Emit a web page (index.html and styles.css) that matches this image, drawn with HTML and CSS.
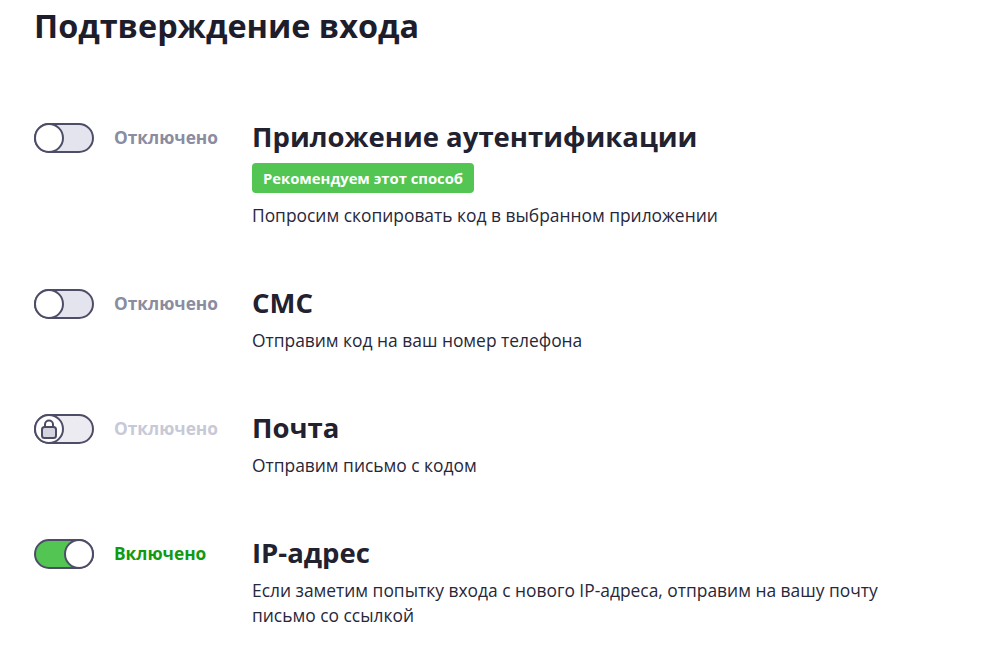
FILE: index.html
```html
<!DOCTYPE html>
<html lang="ru">
<head>
<meta charset="utf-8">
<title>Подтверждение входа</title>
<link rel="stylesheet" href="styles.css">
</head>
<body>
<main class="page">
  <h1 class="title">Подтверждение входа</h1>
  <ul class="methods">
    <li class="method">
      <div class="switch-col">
        <span class="toggle"><span class="knob"></span></span>
        <span class="state">Отключено</span>
      </div>
      <div class="info">
        <h2 class="name">Приложение аутентификации</h2>
        <span class="badge">Рекомендуем этот способ</span>
        <p class="desc">Попросим скопировать код в выбранном приложении</p>
      </div>
    </li>
    <li class="method">
      <div class="switch-col">
        <span class="toggle"><span class="knob"></span></span>
        <span class="state">Отключено</span>
      </div>
      <div class="info">
        <h2 class="name">СМС</h2>
        <p class="desc">Отправим код на ваш номер телефона</p>
      </div>
    </li>
    <li class="method">
      <div class="switch-col">
        <span class="toggle toggle-locked"><span class="knob">
          <svg class="lock" viewBox="0 0 24 24" width="24" height="24" aria-hidden="true">
            <path d="M8 10.5V7.5a4 4 0 0 1 8 0v3" fill="none" stroke="#4b4b66" stroke-width="2"/>
            <rect x="5" y="10" width="14" height="11" rx="2.5" fill="#d3d4de" stroke="#4b4b66" stroke-width="2"/>
          </svg>
        </span></span>
        <span class="state state-locked">Отключено</span>
      </div>
      <div class="info">
        <h2 class="name">Почта</h2>
        <p class="desc">Отправим письмо с кодом</p>
      </div>
    </li>
    <li class="method">
      <div class="switch-col">
        <span class="toggle toggle-on"><span class="knob"></span></span>
        <span class="state state-on">Включено</span>
      </div>
      <div class="info">
        <h2 class="name">IP-адрес</h2>
        <p class="desc">Если заметим попытку входа с нового IP-адреса, отправим на вашу почту письмо со ссылкой</p>
      </div>
    </li>
  </ul>
</main>
</body>
</html>
```
FILE: styles.css
```css
* { box-sizing: border-box; }
html, body { margin: 0; padding: 0; background: #ffffff; }
body {
  font-family: "Open Sans", "Noto Sans", sans-serif;
  color: #25253a;
}
.page {
  padding: 3px 0 0 34px;
}
.title {
  margin: 0;
  font-size: 32.4px;
  line-height: 44px;
  font-weight: 700;
  color: #1d1d2b;
}
.methods {
  list-style: none;
  margin: 72px 0 0;
  padding: 0;
  display: flex;
  flex-direction: column;
  gap: 57px;
}
.method {
  display: flex;
  align-items: flex-start;
}
.switch-col {
  width: 218px;
  flex: none;
  display: flex;
  align-items: center;
  gap: 20px;
  height: 37px;
}
.toggle {
  width: 60px;
  height: 30px;
  flex: none;
  border: 2px solid #4d4d68;
  border-radius: 15px;
  background: #e4e4ee;
  display: flex;
  align-items: center;
}
.knob {
  width: 30px;
  height: 30px;
  margin: -2px;
  border: 2px solid #4d4d68;
  border-radius: 50%;
  background: #ffffff;
  display: flex;
  align-items: center;
  justify-content: center;
}
.toggle-on {
  background: #52c552;
  justify-content: flex-end;
}
.toggle-locked { background: #ebebf1; }
.lock { display: block; }
.state {
  font-size: 17.3px;
  font-weight: 700;
  color: #8a8c9f;
}
.state-locked { color: #c7c9d7; }
.state-on { color: #0f9a12; }
.info {
  display: flex;
  flex-direction: column;
  align-items: flex-start;
}
.name {
  margin: 0;
  font-size: 27.5px;
  line-height: 36px;
  font-weight: 700;
  color: #21212f;
}
.badge {
  margin: 8px 0 3px;
  height: 30px;
  padding: 0 11px;
  display: inline-flex;
  align-items: center;
  background: #52c552;
  border-radius: 4px;
  color: #ffffff;
  font-size: 14.8px;
  font-weight: 700;
}
.desc {
  margin: 7px 0 0;
  font-size: 17.4px;
  line-height: 25px;
  color: #27273a;
  max-width: 640px;
}
```
